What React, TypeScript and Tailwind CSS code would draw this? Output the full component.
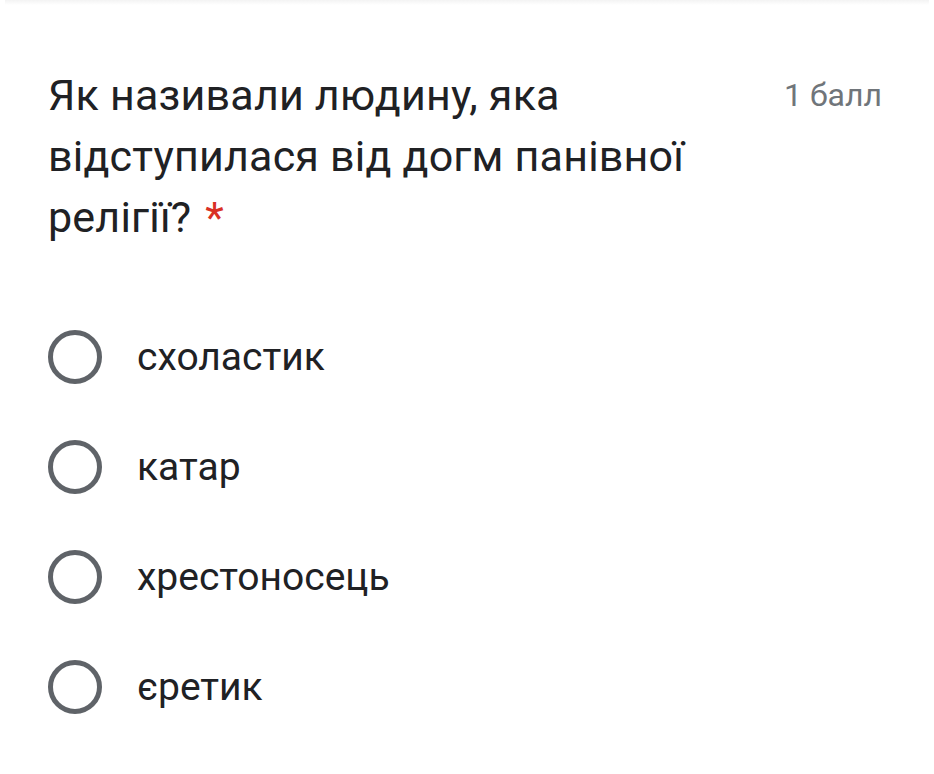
import React from "react";

const options = ["схоластик", "катар", "хрестоносець", "єретик"];

export default function App() {
  return (
    <div className="w-[934px] h-[774px] bg-white overflow-hidden" style={{ fontFamily: "Roboto, 'Liberation Sans', sans-serif" }}>
      {/* shadow of the card above */}
      <div className="mx-[5px] h-[5px] bg-gradient-to-b from-[#f3f3f3] to-white" />

      <div className="pl-[48px] pr-[52px] pt-[60px]">
        {/* Question */}
        <div className="flex justify-between items-start">
          <div className="w-[680px] text-[43px] leading-[61px] text-[#202124] tracking-[0.2px]">
            Як називали людину, яка відступилася від догм панівної релігії?
            <span className="ml-[14px] text-[#d93025]">*</span>
          </div>
          <div className="text-[32px] leading-[61px] text-[#70757a]">1 балл</div>
        </div>

        {/* Options */}
        <div className="mt-[54px] flex flex-col">
          {options.map(opt => (
            <div key={opt} className="h-[110px] flex items-center">
              <span className="w-[54px] h-[54px] rounded-full border-[5px] border-[#5f6368] shrink-0" />
              <span className="ml-[35px] text-[39px] leading-[50px] text-[#202124]">{opt}</span>
            </div>
          ))}
        </div>
      </div>
    </div>
  );
}
